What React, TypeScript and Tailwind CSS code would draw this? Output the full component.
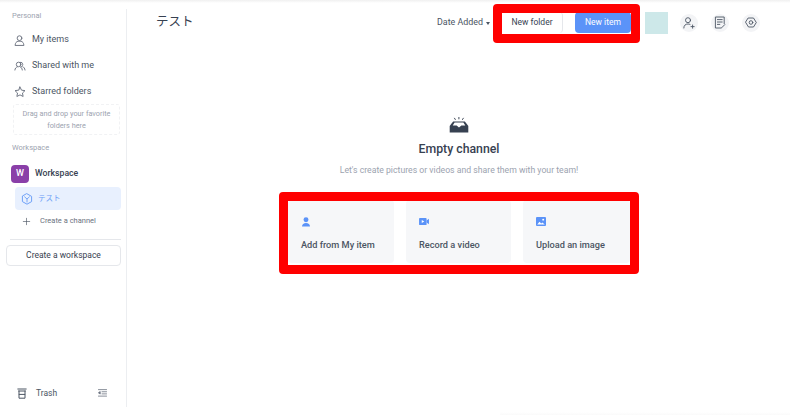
import React from "react";
import { Plus } from "lucide-react";

const stroke = { fill: "none", stroke: "currentColor", strokeWidth: 1.5, strokeLinecap: "round", strokeLinejoin: "round" } as const;

function UserIcon() {
  return <svg width="11" height="11" viewBox="0 0 14 14" {...stroke} strokeWidth={1.2}><circle cx="7" cy="4" r="3" /><path d="M1.4 12.8c.2-2.9 1.8-4.5 3.7-4.9h3.8c1.9.4 3.5 2 3.7 4.9z" /></svg>;
}
function UsersIcon() {
  return <svg width="12" height="11" viewBox="0 0 15 14" {...stroke} strokeWidth={1.2}><circle cx="5.7" cy="4.4" r="2.9" /><path d="M1 11.5c.2-2.2 1.4-3.6 3-4M8 7.5c1.2.5 2.2 1.8 2.4 4" /><path d="M7.6 1.6a2.9 2.9 0 0 1 3.4 2.8c0 1.2-.7 2.2-1.7 2.7M11 7.3c1.6.5 2.6 2 2.9 4.2" /></svg>;
}
function StarIcon() {
  return <svg width="12" height="12" viewBox="0 0 15 15" {...stroke} strokeWidth={1.2}><path d="M7.5 1.3l1.9 3.9 4.3.6-3.1 3 .8 4.3-3.9-2-3.9 2 .8-4.3-3.1-3 4.3-.6z" /></svg>;
}
function ChannelIcon() {
  return <svg width="12" height="12" viewBox="0 0 12 12" {...stroke} strokeWidth={0.9}><path d="M6 .8l4.6 2.6v5.2L6 11.2 1.4 8.6V3.4z" strokeWidth={1} /><path d="M3.6 3.8L6 6l2.4-2.2M6 6v3" /></svg>;
}
function TrashIcon() {
  return <svg width="10" height="11" viewBox="0 0 10 11" {...stroke} strokeWidth={1}><path d="M.8 1h8.4M1.6 3h6.8M2 3v7.2h6V3M2.2 6.4h5.6" /></svg>;
}
function CollapseIcon() {
  return <svg width="9" height="8" viewBox="0 0 10 9" {...stroke} strokeWidth={0.9} strokeLinecap="butt"><path d="M0 .7h10M4 3.1h6M4 5.5h6M0 8h10" /><path d="M2.4 2.9L.4 4.3l2 1.4z" fill="currentColor" /></svg>;
}
function InboxIcon() {
  return <svg width="20" height="16" viewBox="0 0 20 18" preserveAspectRatio="none" fill="none"><path d="M9.9 0v2.6M5.3 1l1.2 2.2M14.5 1l-1.2 2.2" stroke="#374151" strokeWidth="1" /><path d="M4.1 5h11.8l3.4 5.2v7.1H.7v-7.1z" fill="#374151" /><path d="M3.7 9.6L5.6 6.2h8.8l1.9 3.4h-3.9L10 11.8 7.6 9.6z" fill="#fff" /></svg>;
}
function CardUser() {
  return <svg width="10" height="10" viewBox="0 0 10 11" fill="#5b93f8"><circle cx="5" cy="3" r="2.7" /><path d="M.6 10.4c0-2.5 1.8-3.9 4.4-3.9s4.4 1.4 4.4 3.9z" /></svg>;
}
function CardVideo() {
  return <svg width="10" height="9" viewBox="0 0 11 10" fill="#5b93f8"><rect x="0" y="1" width="8.4" height="8" rx="1" /><path d="M8.4 4l2.6-2v6L8.4 6z" /><path d="M3 3.2L5.8 5 3 6.8z" fill="#fff" /></svg>;
}
function CardImage() {
  return <svg width="10" height="9" viewBox="0 0 10 10" preserveAspectRatio="none" fill="#5b93f8"><rect width="10" height="10" rx="1" /><path d="M1.2 8.2l2.3-3 1.7 2 1.1-1.2 2.5 2.2z" fill="#fff" /><circle cx="7.2" cy="3" r="1" fill="#fff" /></svg>;
}
function AddUserIcon() {
  return <svg width="12" height="12" viewBox="0 0 12 12" {...stroke} strokeWidth={0.9}><circle cx="5" cy="3.2" r="2.5" /><path d="M.8 11c.1-2.6 1.6-4 4.2-4 .8 0 1.4.1 2 .4M9.6 8v3.2M8 9.6h3.2" /></svg>;
}
function NoteIcon() {
  return <svg width="12" height="13" viewBox="0 0 12 13" {...stroke} strokeWidth={0.9}><path d="M7.2 12H1.4V1h8.8v6.6" /><path d="M3.4 3.6h4.8M3.4 6h4.8M3.4 8.4h2.4M7.8 11.6l3-3" /></svg>;
}
function GearIcon() {
  return <svg width="12" height="11" viewBox="0 0 12 11" {...stroke} strokeWidth={0.9}><path d="M3.5 1h5L11.3 5.5 8.5 10h-5L.7 5.5z" /><circle cx="6" cy="5.5" r="1.8" /></svg>;
}

function NavItem({ icon, label }: { icon: React.ReactNode; label: string }) {
  return (
    <div className="flex h-[26px] items-center pl-[14px] text-[9px] text-[#4b5563]">
      <span className="flex w-[18px] shrink-0 text-[#6b7280]">{icon}</span>
      <span>{label}</span>
    </div>
  );
}

function ActionCard({ icon, label, className }: { icon: React.ReactNode; label: string; className: string }) {
  return (
    <div className={`flex h-[63px] flex-col rounded-[4px] bg-[#f6f7f9] pl-[13px] pt-[16px] ${className}`}>
      <div className="flex h-[11px] items-center">{icon}</div>
      <div className="mt-[11px] text-[9.2px] font-medium leading-[14px] text-[#4b5563]">{label}</div>
    </div>
  );
}

function RoundButton({ children }: { children: React.ReactNode }) {
  return <div className="flex h-[18px] w-[18px] items-center justify-center rounded-full bg-[#f3f4f6] text-[#4b5563]">{children}</div>;
}

export default function App() {
  return (
    <div className="relative flex h-[415px] w-[790px] overflow-hidden bg-white font-['Roboto','Noto_Sans_CJK_JP',sans-serif]">
      <div className="absolute inset-x-0 top-0 h-[3px] bg-gradient-to-b from-[#f0f0f0] to-white" />
      <div className="absolute bottom-0 left-[500px] right-0 h-[3px] bg-gradient-to-b from-white to-[#fafafa]" />

      <aside className="mb-[8px] mt-[9px] flex w-[127px] shrink-0 flex-col border-r border-[#eceef1]">
        <div className="pl-[12px] pt-[1px] text-[7.5px] leading-[11px] text-[#9ca3af]">Personal</div>
        <div className="mt-[6px]">
          <NavItem icon={<UserIcon />} label="My items" />
          <NavItem icon={<UsersIcon />} label="Shared with me" />
          <NavItem icon={<StarIcon />} label="Starred folders" />
        </div>
        <div className="-mt-[1px] ml-[13px] mr-[6px] flex h-[31px] flex-col items-center justify-center rounded-[3px] border border-dashed border-[#f1f2f4] text-center text-[7.3px] leading-[11.5px] text-[#9ca3af]">
          <div>Drag and drop your favorite</div>
          <div>folders here</div>
        </div>
        <div className="mt-[7px] pl-[12px] text-[7.5px] leading-[11px] text-[#9ca3af]">Workspace</div>
        <div className="mt-[12px] flex items-center pl-[11px]">
          <div className="flex h-[18px] w-[18px] items-center justify-center rounded-[4px] bg-[#8a3fa8] text-[9px] font-medium text-white">W</div>
          <span className="ml-[6px] text-[8.7px] font-medium text-[#374151]">Workspace</span>
        </div>
        <div className="ml-[15px] mr-[5px] mt-[4px] flex h-[23px] items-center rounded-[4px] bg-[#e8f0fe] pl-[6px] text-[7.5px] text-[#6ea0f7]">
          <ChannelIcon />
          <span className="ml-[5px]">テスト</span>
        </div>
        <div className="mt-[1px] flex h-[20px] items-center pl-[21px] text-[7.5px] text-[#6b7280]">
          <Plus size={11} strokeWidth={1.4} className="text-[#4b5563]" />
          <span className="ml-[8px]">Create a channel</span>
        </div>
        <div className="ml-[10px] mr-[5px] mt-[8px] border-t border-[#e5e7eb]" />
        <div className="ml-[6px] mr-[5px] mt-[5px] flex h-[21px] items-center justify-center rounded-[4px] border border-[#e5e7eb] text-[8.5px] text-[#374151]">Create a workspace</div>
        <div className="mb-[1px] mt-auto flex h-[26px] items-center pl-[17px] pr-[19px] text-[8.5px] text-[#4b5563]">
          <TrashIcon />
          <span className="ml-[9px]">Trash</span>
          <span className="ml-auto text-[#6b7280]"><CollapseIcon /></span>
        </div>
      </aside>

      <main className="flex min-w-0 flex-1 flex-col">
        <header className="flex h-[45px] items-center pl-[29px] pr-[30px]">
          <h1 className="text-[12.5px] font-normal text-[#374151]">テスト</h1>
          <div className="ml-auto flex items-center pt-[1px]">
            <span className="text-[8.9px] text-[#4b5563]">Date Added</span>
            <span className="ml-[3px] mt-[1px] h-0 w-0 border-x-[2.5px] border-t-[3px] border-x-transparent border-t-[#4b5563]" />
          </div>
          <div className="ml-[12px] flex h-[21px] w-[129px] items-center bg-white">
            <div className="flex h-[21px] w-[61px] items-center justify-center rounded-r-[4px] border-r border-[#e5e7eb] text-[8.5px] text-[#374151]">New folder</div>
            <div className="ml-[12px] flex h-[21px] w-[56px] items-center justify-center rounded-[4px] bg-[#5b93f8] text-[8.5px] text-white">New item</div>
          </div>
          <div className="ml-[14px] h-[22px] w-[23px] bg-[#cde8e9]" />
          <div className="ml-[12px] flex gap-[13px]">
            <RoundButton><AddUserIcon /></RoundButton>
            <RoundButton><NoteIcon /></RoundButton>
            <RoundButton><GearIcon /></RoundButton>
          </div>
        </header>

        <div className="flex flex-col items-center pl-[1px] pt-[72px]">
          <InboxIcon />
          <h2 className="mt-[8px] text-[12.3px] font-medium leading-[16px] text-[#374151]">Empty channel</h2>
          <p className="mt-[7px] text-[8.7px] leading-[12px] text-[#9ca3af]">Let's create pictures or videos and share them with your team!</p>
          <div className="mt-[24px] flex w-[342px]">
            <ActionCard icon={<CardUser />} label="Add from My item" className="w-[106px]" />
            <ActionCard icon={<CardVideo />} label="Record a video" className="ml-[12px] w-[105px]" />
            <ActionCard icon={<CardImage />} label="Upload an image" className="ml-[12px] w-[107px]" />
          </div>
        </div>
      </main>

      {/* red annotation rectangles drawn over the screenshot */}
      <div className="pointer-events-none absolute left-[493px] top-[4px] h-[39px] w-[147px] rounded-[4px] border-[9px] border-[#ff0000]" />
      <div className="pointer-events-none absolute left-[279px] top-[192px] h-[82px] w-[360px] rounded-[4px] border-[9px] border-[#ff0000]" />
    </div>
  );
}
